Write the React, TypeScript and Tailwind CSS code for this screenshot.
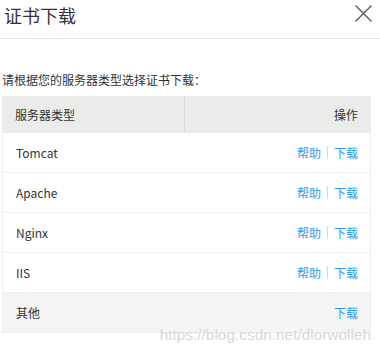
// ============================================
// CERTIFICATE DOWNLOAD DIALOG
// ============================================

const servers = [
  { name: 'Tomcat', help: true },
  { name: 'Apache', help: true },
  { name: 'Nginx', help: true },
  { name: 'IIS', help: true },
  { name: '其他', help: false },
];

const font = "font-['Noto_Sans_CJK_SC','Noto_Sans',sans-serif]";

const App = () => {
  return (
    <div className={`relative w-[380px] h-[354px] overflow-hidden bg-white text-[#333] ${font}`}>
      {/* Header */}
      <div className="h-[39px] flex items-start justify-between border-b border-[#e5e5e5] pl-[4px] pr-[8px]">
        <h1 className="mt-[3px] text-[18px] leading-[24px] text-[#333]">证书下载</h1>
        <svg className="mt-[5px] w-[17px] h-[17px]" viewBox="0 0 17 17" fill="none" stroke="#555" strokeWidth="1.3">
          <path d="M0.5 0.5 L16.5 16.5 M16.5 0.5 L0.5 16.5" />
        </svg>
      </div>

      {/* Body */}
      <p className="mt-[32px] pl-[2px] text-[12px] leading-[18px]">
        请根据您的服务器类型选择证书下载：
      </p>

      <div className="mt-[7px] ml-[2px] w-[369px] border-x border-[#eeeeee] text-[12px]">
        <div className="h-[37px] flex bg-[#ebecea]">
          <div className="w-[182px] flex items-center pl-[12px] border-r border-[#dcdcdc]">服务器类型</div>
          <div className="flex-1 flex items-center justify-end pr-[12px]">操作</div>
        </div>

        {servers.map((s) => (
          <div
            key={s.name}
            className={`h-[40px] flex items-center justify-between pl-[13px] pr-[12px] border-b border-[#efefef] ${
              s.help ? 'bg-white' : 'bg-[#f4f4f4]'
            }`}
          >
            <span>{s.name}</span>
            <span className="flex items-center text-[#2d9cf0]">
              {s.help && (
                <>
                  <span>帮助</span>
                  <span className="mx-[6px] w-px h-[13px] bg-[#d8d8d8]" />
                </>
              )}
              <span>下载</span>
            </span>
          </div>
        ))}
      </div>

      {/* Watermark */}
      <div className="absolute right-[9px] top-[325px] text-[15.4px] leading-[20px] text-[#d8d8d8] font-['Liberation_Sans',Arial,sans-serif]">
        https://blog.csdn.net/dlorwolleh
      </div>
    </div>
  );
};

export default App;
